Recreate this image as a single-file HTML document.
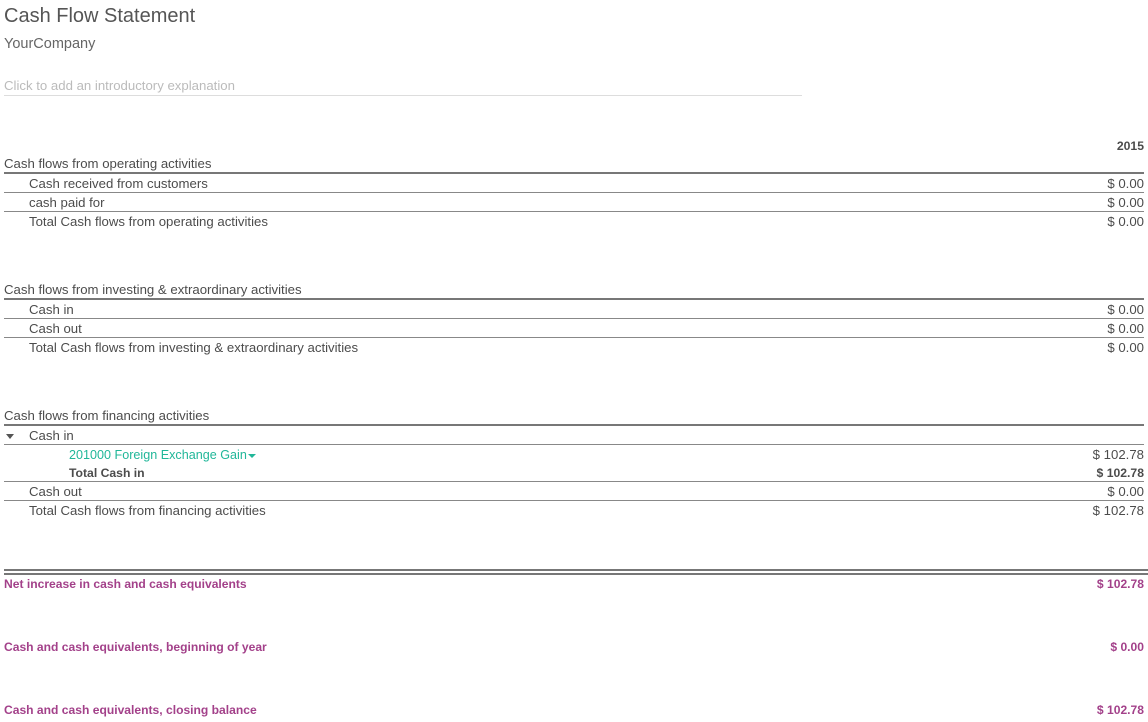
<!DOCTYPE html>
<html><head><meta charset="utf-8"><style>
body{margin:0;width:1148px;height:722px;background:#fff;font-family:"Liberation Sans",sans-serif;color:#4c4c4c;position:relative;overflow:hidden}
.t{position:absolute;height:16px;line-height:16px;font-size:13.2px;white-space:nowrap;margin-top:1px}
.r{position:absolute;right:4px;height:16px;line-height:16px;font-size:13.2px;text-align:right;margin-top:1px}
.l{position:absolute;left:4px;right:4px;height:1px;background:#888}
.h{height:2px;background:#777}
.b{font-weight:bold;font-size:12.2px}
.p{color:#a3418a;font-weight:bold;font-size:12.1px}
.g{color:#21b799;font-size:12.6px}
</style></head><body>
<div class="t" style="left:4px;top:2px;height:26px;line-height:26px;font-size:20px;color:#555">Cash Flow Statement</div>
<div class="t" style="left:4px;top:34px;height:18px;line-height:18px;font-size:14.5px;color:#666">YourCompany</div>
<div class="t" style="left:4px;top:77px;color:#bbb">Click to add an introductory explanation</div>
<div style="position:absolute;left:4px;width:798px;top:95px;height:1px;background:#ddd"></div>
<div class="r b" style="top:137px">2015</div>

<div class="t" style="left:4px;top:155px">Cash flows from operating activities</div>
<div class="l h" style="top:172px"></div>
<div class="t" style="left:29px;top:175px">Cash received from customers</div><div class="r" style="top:175px">$ 0.00</div>
<div class="l" style="top:192px"></div>
<div class="t" style="left:29px;top:194px">cash paid for</div><div class="r" style="top:194px">$ 0.00</div>
<div class="l" style="top:211px"></div>
<div class="t" style="left:29px;top:213px">Total Cash flows from operating activities</div><div class="r" style="top:213px">$ 0.00</div>

<div class="t" style="left:4px;top:281px">Cash flows from investing &amp; extraordinary activities</div>
<div class="l h" style="top:298px"></div>
<div class="t" style="left:29px;top:301px">Cash in</div><div class="r" style="top:301px">$ 0.00</div>
<div class="l" style="top:318px"></div>
<div class="t" style="left:29px;top:320px">Cash out</div><div class="r" style="top:320px">$ 0.00</div>
<div class="l" style="top:337px"></div>
<div class="t" style="left:29px;top:339px">Total Cash flows from investing &amp; extraordinary activities</div><div class="r" style="top:339px">$ 0.00</div>

<div class="t" style="left:4px;top:407px">Cash flows from financing activities</div>
<div class="l h" style="top:424px"></div>
<div style="position:absolute;left:6px;top:434px;width:0;height:0;border-left:4px solid transparent;border-right:4px solid transparent;border-top:5px solid #555"></div>
<div class="t" style="left:29px;top:427px">Cash in</div>
<div class="l" style="top:444px"></div>
<div class="t g" style="left:69px;top:446px">201000 Foreign Exchange Gain</div>
<div style="position:absolute;left:248px;top:454px;width:0;height:0;border-left:4px solid transparent;border-right:4px solid transparent;border-top:4px solid #21b799"></div>
<div class="r" style="top:446px">$ 102.78</div>
<div class="t b" style="left:69px;top:464px">Total Cash in</div><div class="r b" style="top:464px">$ 102.78</div>
<div class="l" style="top:481px"></div>
<div class="t" style="left:29px;top:483px">Cash out</div><div class="r" style="top:483px">$ 0.00</div>
<div class="l" style="top:500px"></div>
<div class="t" style="left:29px;top:502px">Total Cash flows from financing activities</div><div class="r" style="top:502px">$ 102.78</div>

<div class="l h" style="top:569px;right:0"></div>
<div class="l h" style="top:573px;right:0"></div>
<div class="t p" style="left:4px;top:575px">Net increase in cash and cash equivalents</div><div class="r p" style="top:575px">$ 102.78</div>
<div class="t p" style="left:4px;top:638px">Cash and cash equivalents, beginning of year</div><div class="r p" style="top:638px">$ 0.00</div>
<div class="t p" style="left:4px;top:701px">Cash and cash equivalents, closing balance</div><div class="r p" style="top:701px">$ 102.78</div>
</body></html>
